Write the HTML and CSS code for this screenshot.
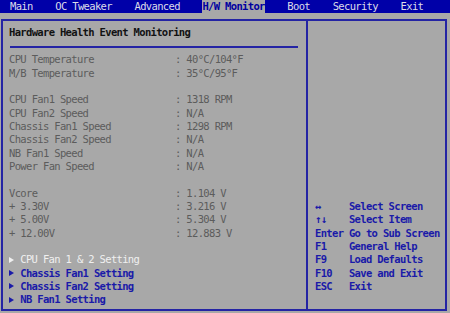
FILE: index.html
```html
<!DOCTYPE html>
<html lang="en">
<head>
  <meta charset="UTF-8" />
  <title>H/W Monitor</title>
  <link rel="stylesheet" href="styles.css">
</head>
<body>
  <!-- top menu -->
  <div class="menubar">
    <span class="tab">Main</span>
    <span class="tab">OC Tweaker</span>
    <span class="tab">Advanced</span>
    <span class="tab active">H/W Monitor</span>
    <span class="tab">Boot</span>
    <span class="tab">Security</span>
    <span class="tab">Exit</span>
  </div>

  <div class="frame">
    <div class="main">
      <div class="title">Hardware Health Event Monitoring</div>
      <div class="rule"></div>

      <div class="row"><span class="label">CPU Temperature</span><span>: 40°C/104°F</span></div>
      <div class="row"><span class="label">M/B Temperature</span><span>: 35°C/95°F</span></div>
      <div class="row blank"></div>
      <div class="row"><span class="label">CPU Fan1 Speed</span><span>: 1318 RPM</span></div>
      <div class="row"><span class="label">CPU Fan2 Speed</span><span>: N/A</span></div>
      <div class="row"><span class="label">Chassis Fan1 Speed</span><span>: 1298 RPM</span></div>
      <div class="row"><span class="label">Chassis Fan2 Speed</span><span>: N/A</span></div>
      <div class="row"><span class="label">NB Fan1 Speed</span><span>: N/A</span></div>
      <div class="row"><span class="label">Power Fan Speed</span><span>: N/A</span></div>
      <div class="row blank"></div>
      <div class="row"><span class="label">Vcore</span><span>: 1.104 V</span></div>
      <div class="row"><span class="label">+ 3.30V</span><span>: 3.216 V</span></div>
      <div class="row"><span class="label">+ 5.00V</span><span>: 5.304 V</span></div>
      <div class="row"><span class="label">+ 12.00V</span><span>: 12.883 V</span></div>
      <div class="row blank"></div>

      <div class="sub current">CPU Fan 1 &amp; 2 Setting</div>
      <div class="sub">Chassis Fan1 Setting</div>
      <div class="sub">Chassis Fan2 Setting</div>
      <div class="sub">NB Fan1 Setting</div>
    </div>

    <!-- key help -->
    <div class="help">
      <div class="key-row"><span class="key">↔</span><span>Select Screen</span></div>
      <div class="key-row"><span class="key">↑↓</span><span>Select Item</span></div>
      <div class="key-row"><span class="key">Enter</span><span>Go to Sub Screen</span></div>
      <div class="key-row"><span class="key">F1</span><span>General Help</span></div>
      <div class="key-row"><span class="key">F9</span><span>Load Defaults</span></div>
      <div class="key-row"><span class="key">F10</span><span>Save and Exit</span></div>
      <div class="key-row"><span class="key">ESC</span><span>Exit</span></div>
    </div>
  </div>
</body>
</html>
```

FILE: styles.css
```css
body {
  margin: 0;
  height: 313px;
  overflow: hidden;
  background: #a8a8a8;
  font-family: 'DejaVu Sans Mono', monospace;
  font-size: 10.5px;
  letter-spacing: -0.66px;
  line-height: 13.33px;
  color: #5c5c5c;
}

.menubar {
  display: flex;
  gap: 22.64px;
  height: 13px;
  line-height: 13px;
  padding-left: 10px;
  background: #0000a8;
  color: #dcdce8;
}

.tab {
  white-space: pre;
}

.tab.active {
  background: #a8a8a8;
  color: #0000a0;
  font-weight: bold;
}

.frame {
  display: flex;
  height: 292px;
  margin: 6px 3px 0 1px;
  box-sizing: border-box;
  border: 2px solid #2424a4;
}

.main {
  width: 297px;
  padding: 5.3px 0 0 6px;
  border-right: 2px solid #2424a4;
}

.title {
  font-weight: bold;
  color: #121212;
}

.rule {
  width: 288px;
  height: 2px;
  margin: 6px 0 5.7px 1px;
  background: #2424a4;
}

.row {
  display: flex;
  height: 13.33px;
  white-space: pre;
}

.label {
  width: 166px;
}

.sub {
  height: 13.33px;
  font-weight: bold;
  color: #1a1aa8;
  white-space: pre;
}

.sub::before {
  content: "";
  display: inline-block;
  width: 0;
  height: 0;
  border-left: 5px solid currentColor;
  border-top: 3px solid transparent;
  border-bottom: 3px solid transparent;
  margin: 0 6.3px 1px 0;
  vertical-align: middle;
}

.sub.current {
  color: #f0f0f0;
  font-weight: normal;
}

.help {
  flex: 1;
  padding: 179px 0 0 7px;
  font-weight: bold;
  color: #1a1aa8;
}

.key-row {
  display: flex;
  height: 13.33px;
  white-space: pre;
}

.key {
  width: 33.96px;
}
```
